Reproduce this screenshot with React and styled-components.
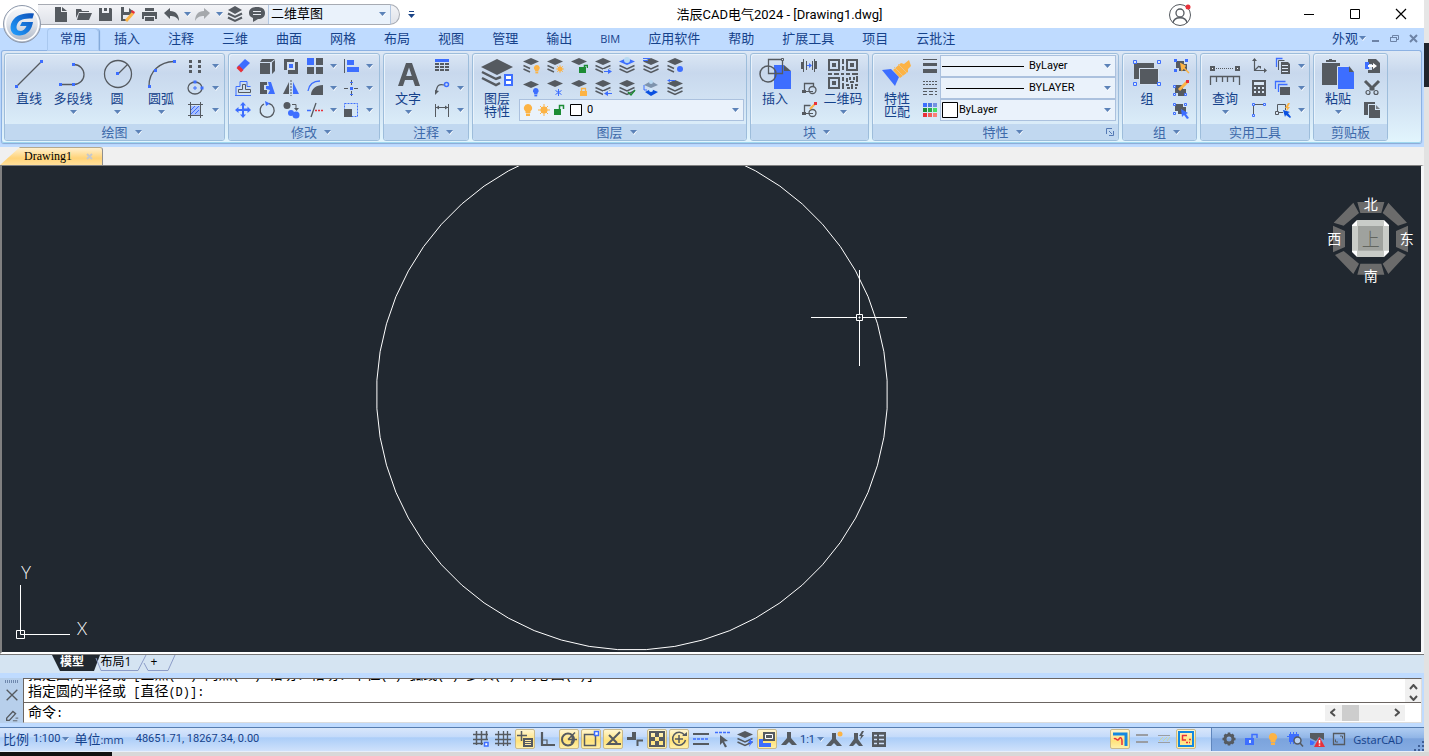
import styled, { createGlobalStyle, css } from 'styled-components';

const G = '#555a60';
const B = '#3d6eff';
const O = '#fcb345';
const R = '#e8303a';
const GR = '#1d8c35';

const StackIcon = ({ top = G, children }) => (
  <>
    <path d="M1 4.500 9 1l8 3.500L9 8z" fill={top} />
    <path d="M1.500 8.500 9 12l7.500-3.500M1.500 12 9 15.500l7.500-3.500" fill="none" stroke={G} strokeWidth="1.500" />
    {children}
  </>
);

const HalfStack = ({ children }) => (
  <>
    <path d="M1 4.500 9 1l8 3.500L9 8z" fill={G} />
    <path d="M1.500 8.500 8 11.500M1.500 12 8 15" fill="none" stroke={G} strokeWidth="1.500" />
    {children}
  </>
);

const Bulb = ({ x = 0, y = 0, s = 1, fill = O }) => (
  <g transform={`translate(${x} ${y}) scale(${s})`} fill={fill}>
    <path d="M4 0a4 4 0 0 0-2.500 7.200V9h5V7.200A4 4 0 0 0 4 0z" />
    <rect x="2" y="9.500" width="4" height="2.500" />
  </g>
);

const ICONS = {
  points: <path fill={G} d="M3 3h3v3H3zM12 3h3v3h-3zM3 8h3v3H3zM12 8h3v3h-3zM3 13h3v3H3zM12 13h3v3h-3z" />,
  ellipse: (
    <>
      <ellipse cx="9" cy="9" rx="7" ry="6" fill="none" stroke={G} strokeWidth="1.300" />
      <path fill={B} d="M7.500 1.500h3v3h-3zM14.500 7.500h3v3h-3zM8.500 7h1v1.500H11v1H9.500V11h-1V9.500H7v-1h1.500z" />
    </>
  ),
  hatch: (
    <>
      <rect x="5" y="5" width="9" height="9" fill="#a9c0fb" />
      <path d="M5 9l4-4M5 13l8-8M9 13l4-4" stroke={B} />
      <path d="M2 3.500h15M2 14.500h15M4.500 1v16M14.500 1v16" stroke={G} />
    </>
  ),
  erase: (
    <>
      <path d="M11 2l5 4-8 8-5-4z" fill={B} />
      <path d="M5 8.500l4.500 4.500L7 15.500 2.500 11z" fill={R} />
    </>
  ),
  box: <path fill={G} d="M2 6h10v11H2zM4 2h13l-4 3H2zM14 5.500l3-2.500v11l-3 3z" />,
  copy: (
    <>
      <path fill={G} d="M2 2h10v3h4v12H6v-4H2z" />
      <path fill="#d5e1f1" d="M5 5h8v8H5z" />
      <path fill={B} d="M7 7h4v4H7z" />
    </>
  ),
  array: (
    <>
      <path fill={B} d="M1 1h7v7H1z" />
      <path fill={G} d="M10 1h7v7h-7zM1 10h7v7H1zM10 10h7v7h-7z" />
    </>
  ),
  align: (
    <>
      <path fill={G} d="M2 2h1v14H2z" />
      <path fill={B} d="M5 3h7v5H5zM5 10h12v5H5z" />
    </>
  ),
  offset: (
    <>
      <path d="M2 16.500v-9h4v-5h7v5h3.500" fill="none" stroke={B} />
      <path d="M16.500 13.500h-12v-3h4v-5h3v5h5z" fill="none" stroke={G} />
      <path d="M1 16.500h16" stroke={B} />
    </>
  ),
  stretch: (
    <>
      <path fill={G} d="M2 3h7v3H6v5h3v4H2z" />
      <path fill={B} d="M10 3h3l4 12h-7l2-4-4-1V7h3z" />
    </>
  ),
  mirror: (
    <>
      <path fill={G} d="M7 3v12H1z" />
      <path d="M9 1v16" stroke={G} strokeDasharray="2 1" />
      <path fill={B} d="M11 3v12h6z" />
    </>
  ),
  fillet: (
    <>
      <path d="M2 12C3 6 7 2 14 2" fill="none" stroke={B} strokeWidth="1.300" />
      <path fill={G} d="M5 16c0-6 5-10 12-10v10z" />
    </>
  ),
  breakAt: (
    <>
      <path d="M2 9.500h4M12 9.500h4M9.500 1v5M9.500 12v5" stroke={G} />
      <path fill={B} d="M8 8h3v3H8zM8 3h3v1H8zM8 15h3v1H8z" />
    </>
  ),
  move: (
    <path
      fill={B}
      d="M9 1l3 3.500h-2v3h3.500v-2L17 9l-3.500 3v-2H10v3.500h2L9 17l-3-3.500h2V10H4.500v2L1 9l3.500-3v2H8V4.500H6z"
    />
  ),
  rotate: (
    <>
      <path d="M6 3a7 7 0 1 0 5-.500" fill="none" stroke={G} strokeWidth="1.300" />
      <path fill={B} d="M7 0l5 2.500L8 5z" />
    </>
  ),
  copyTo: (
    <>
      <circle cx="5" cy="4.500" r="3.500" fill={G} />
      <circle cx="9" cy="12" r="3" fill={B} />
      <circle cx="14" cy="14" r="3.500" fill={B} />
      <path d="M10 3.500h4v4" fill="none" stroke={G} />
      <path fill={G} d="M12 7h5l-2.500 3z" />
    </>
  ),
  trim: (
    <>
      <path d="M10 2L5 16" stroke={G} strokeWidth="1.300" />
      <path d="M1 9.500h4" stroke={B} strokeWidth="1.500" />
      <path d="M9 9.500h9" stroke={R} strokeWidth="1.500" strokeDasharray="2 1" />
    </>
  ),
  scale: (
    <>
      <rect x="2.500" y="2.500" width="13" height="13" fill="none" stroke={B} strokeDasharray="2 1" />
      <path fill={G} d="M2 8h8v8H2z" />
    </>
  ),
  table: (
    <>
      <path fill={B} d="M2 2h14v3H2z" />
      <path fill={G} d="M2 6h4v2H2zM7 6h4v2H7zM12 6h4v2h-4zM2 9h4v2H2zM7 9h4v2H7zM12 9h4v2h-4zM2 12h4v2H2zM7 12h4v2H7zM12 12h4v2h-4z" />
    </>
  ),
  leader: (
    <>
      <path d="M3 13C4 6 6 5 11 6" fill="none" stroke={G} strokeWidth="1.200" />
      <path fill={G} d="M2 11l4 1-4 4z" />
      <circle cx="13.500" cy="5.500" r="2" fill="none" stroke={B} strokeWidth="1.500" />
    </>
  ),
  dimension: (
    <>
      <path d="M2.500 3v13M15.500 3v13M3 6.500h12" fill="none" stroke={G} />
      <path fill={G} d="M3 6.500l3-2v4zM15 6.500l-3-2v4z" />
    </>
  ),
  layOff: (
    <HalfStack>
      <Bulb x={12} y={8} s={0.7} />
    </HalfStack>
  ),
  layFreeze: (
    <HalfStack>
      <circle cx="14" cy="12" r="2.500" fill={O} />
      <path d="M14 8v8M10 12h8M11 9l6 6M17 9l-6 6" stroke={O} strokeWidth=".8" />
    </HalfStack>
  ),
  layUnlock: (
    <>
      <path d="M1 4.500 9 1l8 3.500L9 8z" fill={G} />
      <path fill={GR} d="M9 10h7v6H9z" />
      <path d="M14.500 10V8.500h3V11" fill="none" stroke={GR} strokeWidth="1.500" />
    </>
  ),
  layMatch: (
    <StackIcon>
      <path fill="#c9d9ed" d="M9 12h9v6H9z" />
      <path fill={B} d="M10 14h4v-2l4 2.500-4 2.500v-2h-4z" />
    </StackIcon>
  ),
  layCurrent: (
    <StackIcon top={B}>
      <circle cx="9" cy="3" r="3" fill="#b7d9f2" />
    </StackIcon>
  ),
  layPrev: (
    <StackIcon>
      <path fill={B} d="M1 1h7v1H1zM1 3h5v1H1z" />
    </StackIcon>
  ),
  layWalk: (
    <HalfStack>
      <circle cx="14" cy="12" r="3" fill={B} />
    </HalfStack>
  ),
  layOn: (
    <>
      <path d="M1 5.500 9 2l8 3.500L9 9z" fill={G} />
      <Bulb x={11} y={9} s={0.7} fill={B} />
    </>
  ),
  layThaw: (
    <>
      <path d="M1 4.500 9 1l8 3.500L9 8z" fill={G} />
      <path d="M12.500 10v7M9.500 11.500l6 4M15.500 11.500l-6 4" stroke={B} />
    </>
  ),
  layLock: (
    <>
      <path d="M1 4.500 9 1l8 3.500L9 8z" fill={G} />
      <path fill={O} d="M10 12h7v5h-7z" />
      <path d="M11.500 12v-2.500h4V12" fill="none" stroke={O} strokeWidth="1.300" />
    </>
  ),
  layChange: (
    <StackIcon>
      <path fill="#cfdeef" d="M9 12h9v6H9z" />
      <path fill={B} d="M18 14h-4v-2l-4 2.500 4 2.500v-2h4z" />
    </StackIcon>
  ),
  layCheck: (
    <StackIcon>
      <path d="M10 13l3 3 4-5" fill="none" stroke={GR} strokeWidth="1.500" />
    </StackIcon>
  ),
  layMerge: (
    <>
      <path d="M2 6l7-4 7 4-7 3z" fill="#7d93ad" />
      <path d="M3 13l6-3 7 3-7 4z" fill="#0a50e0" />
      <circle cx="9" cy="3" r="2" fill="#b7d9f2" />
      <circle cx="9" cy="11" r="2" fill="#cfe8fa" />
      <path d="M2 6v5h3" fill="none" stroke={B} />
    </>
  ),
  layIso: (
    <StackIcon>
      <path fill={B} d="M1 1.500L4 0v1h5v1H4v1z" />
    </StackIcon>
  ),
  blockEdit: (
    <>
      <path d="M3.500 2v13M14.500 2v13" stroke={G} />
      <path fill={G} d="M1 5h3v7H1zM14 4h3v8h-3zM6 4h1v9H6zM12 4h1v9h-1z" />
      <path fill={B} d="M7 8h2V6l3 2.500L9 11V9H7z" />
    </>
  ),
  blockBase: (
    <>
      <path d="M4.500 13V4.500h9V7" fill="none" stroke={G} strokeWidth="1.300" />
      <circle cx="12.500" cy="11" r="3.500" fill="none" stroke={G} strokeWidth="1.300" />
      <path fill={G} d="M2 11h4v3H2zM6 12h7v1H6z" />
    </>
  ),
  blockAttr: (
    <>
      <path d="M4.500 13V4.500h6" fill="none" stroke={G} strokeWidth="1.300" />
      <circle cx="12.500" cy="12" r="3.500" fill="none" stroke={G} strokeWidth="1.300" />
      <path fill={G} d="M2 11h4v3H2zM6 12h7v1H6z" />
      <path d="M10 8l5-5" stroke={O} strokeWidth="2" />
      <path fill={R} d="M14 1h3v3h-3z" />
    </>
  ),
  lineWeight: <path fill={G} d="M2 2h14v1H2zM2 6h14v3H2zM2 12h14v4H2z" />,
  lineType: (
    <>
      <path d="M2 2.500h14M2 5.500h14" stroke={G} strokeDasharray="2 1" />
      <path d="M2 9.500h14" stroke={G} />
      <path d="M2 12.500h14M2 15.500h14" stroke={G} strokeDasharray="4 2" />
    </>
  ),
  colors: (
    <>
      <path fill={B} d="M2 2h4v4H2z" />
      <path fill="#4f77df" d="M7 2h4v4H7z" />
      <path fill="#7391e0" d="M12 2h4v4h-4z" />
      <path fill={GR} d="M2 7h4v4H2z" />
      <path fill="#2aa847" d="M7 7h4v4H7z" />
      <path fill="#43df65" d="M12 7h4v4h-4z" />
      <path fill={R} d="M2 12h4v4H2z" />
      <path fill="#f25d57" d="M7 12h4v4H7z" />
      <path fill="#fa7f76" d="M12 12h4v4h-4z" />
    </>
  ),
  groupSearch: (
    <>
      <path fill={G} d="M4 4h8v3h3v7H7v-3H4z" />
      <path fill={B} d="M2 2h3v3H2zM13 2h3v3h-3zM2 12h3v3H2z" />
      <path d="M9 7l4 2-3 4zM12 11l5 5" fill={O} stroke={O} strokeWidth="1.500" />
    </>
  ),
  groupEdit: (
    <>
      <path fill={G} d="M3 6h8v4h3v7H6v-3H3z" />
      <path fill="#dbe7f6" stroke={B} d="M1.500 6.500h2v2h-2zM1.500 14.500h2v2h-2zM12.500 14.500h2v2h-2z" />
      <path d="M7 11l8-8" stroke={O} strokeWidth="3" />
      <path fill={R} d="M14 1h3v3h-3z" />
    </>
  ),
  groupSelect: (
    <>
      <path fill={G} d="M3 3h8v3h3v7H6v-3H3z" />
      <path fill="#dbe7f6" stroke={B} d="M1.500 2.500h2v2h-2zM12.500 2.500h2v2h-2zM1.500 11.500h2v2h-2z" />
      <path fill={B} d="M9 8l7 4-2 1 3 4-2 1-3-4-2 2z" />
    </>
  ),
  ucs: (
    <>
      <path d="M4.500 2v11.500H16M4.500 13.500L9 9" fill="none" stroke={G} strokeWidth="1.200" />
      <path fill={G} d="M2 4l2.500-3L7 4zM14 11l3 2.500-3 2.500zM8 9h3v3z" />
    </>
  ),
  calc: (
    <>
      <path fill={G} d="M2 1h14v16H2z" />
      <path fill="#d9e7f5" d="M4 3h10v3H4zM4 8h2v2H4zM8 8h2v2H8zM12 8h2v2h-2zM4 12h2v2H4zM8 12h2v2H8zM12 12h2v2h-2z" />
    </>
  ),
  corner: (
    <>
      <path d="M3.500 14V3.500H14" fill="none" stroke={G} />
      <path fill="#dbe7f6" stroke={B} d="M2.500 2.500h2v2h-2zM13.500 2.500h2v2h-2zM2.500 13.500h2v2h-2z" />
    </>
  ),
  pages: (
    <>
      <path d="M2.500 10V1.500h6" fill="none" stroke={B} strokeWidth="1.300" />
      <path d="M4.500 13V3.500h6" fill="none" stroke={G} />
      <path fill={G} d="M7 5h7l2 2v10H7z" />
      <path stroke="#dbe7f6" d="M8 8.500h6M8 11.500h6M8 14.500h6" />
    </>
  ),
  windows: (
    <>
      <path d="M1.500 10V2.500h10" fill="none" stroke={B} strokeWidth="1.300" />
      <path d="M4.500 13V5.500h9" fill="none" stroke={B} strokeWidth="1.300" />
      <path fill={G} d="M6 8h10v8H6z" />
    </>
  ),
  quickSelect: (
    <>
      <path d="M3.500 12V3.500h8V9M4 11.500h5" fill="none" stroke={G} />
      <path fill="#dbe7f6" stroke={G} d="M1.500 10.500h3v3h-3z" />
      <path fill={O} d="M14 2l-3 5h2l-1 4 4-5h-2l2-4z" />
      <path fill="#0a50e0" d="M9 9l7 2-2 1 3 4-1 1-4-3-1 2z" />
    </>
  ),
  pasteAs: (
    <>
      <path fill={G} d="M5 2h8l4 4v10H5v-3h4V7H5z" />
      <path fill={B} d="M2 5h4v7H2z" />
      <path fill="#fff" d="M5 8h5V6l4 3-4 3v-2H5z" />
    </>
  ),
  cut: (
    <>
      <path d="M2 2l9 9M16 2l-9 9" stroke={G} strokeWidth="3" />
      <circle cx="5" cy="13.500" r="2" fill="none" stroke={G} strokeWidth="1.200" />
      <circle cx="13" cy="13.500" r="2" fill="none" stroke={G} strokeWidth="1.200" />
    </>
  ),
  copyClip: (
    <>
      <path fill={G} d="M1 1h11v2H5v11H1z" />
      <path fill={G} d="M6 4h6v5h5v8H6z" />
      <path fill="#7b8087" d="M13 4l4 4h-4z" />
    </>
  ),

  newFile: <path fill={G} d="M3 2h6v5h6v10H3zM10 2l5 4h-5z" />,
  open: <path fill={G} d="M2 4h5l1 2h7v1H5l-3 6zM5 8h13l-3 7H3z" />,
  save: <path fill={G} d="M3 3h3v5h7V3h2l1 1v12H3zM8 3h3v3H8z" />,
  saveAs: (
    <>
      <path fill={G} d="M3 2h3v5h5V3l5 4-3 3H5v4h4v2H3z" />
      <path d="M8 16l7-8" stroke={O} strokeWidth="3" />
      <path fill={R} d="M14 5l3 2-1 2-3-2z" />
    </>
  ),
  print: (
    <>
      <path fill={G} d="M5 3h9v3H5zM2 7h15v7h-2v-3H4v3H2z" />
      <path fill={G} d="M5 12h9v4H5z" />
    </>
  ),
  undo: <path fill={G} d="M2 8l6-5v3c6 0 9 4 9 10-2-4-5-5-9-5v3z" />,
  redo: <path fill="#a5a8ac" d="M16 8l-6-5v3C4 6 1 10 1 16c2-4 5-5 9-5v3z" />,
  layers: (
    <>
      <path d="M2 5 9 1l7 4-7 4z" fill={G} />
      <path d="M2 8.500 9 12l7-3.500M2 12.500 9 16l7-3.500" fill="none" stroke={G} strokeWidth="2" />
    </>
  ),
  chat: (
    <>
      <path fill={G} d="M9 2c5 0 8 2 8 6s-3 6-7 6l-5 3v-4c-3-1-4-3-4-5 0-4 3-6 8-6z" />
      <path stroke="#e6e9f0" d="M5 6.500h8M5 9.500h8" />
    </>
  ),

  snap: (
    <>
      <path d="M4.500 1v14M9.500 1v14M14.500 1v9M1 4.500h15M1 9.500h15M1 13.500h10" stroke={G} strokeWidth="1.500" />
      <path fill="#fff" stroke={B} strokeWidth="1.500" d="M12.500 12.500h3.500v3.500h-3.500z" />
    </>
  ),
  grid: <path d="M4.500 1v15M9.500 1v15M13.500 1v15M1 4.500h16M1 9.500h16M1 13.500h16" stroke={G} strokeWidth="1.300" />,
  dynInput: (
    <>
      <path d="M5.500 1v10M1 5.500h10" stroke={G} strokeWidth="1.500" />
      <path fill={G} d="M7 8h10v9H7z" />
      <path stroke="#ffe9a6" d="M9 10.500h6M9 12.500h6M9 14.500h6" />
    </>
  ),
  ortho: (
    <>
      <path d="M4 2v13h13" fill="none" stroke={G} strokeWidth="2.200" />
      <path d="M4 10h5v5" fill="none" stroke={G} strokeWidth="1.200" />
    </>
  ),
  polar: (
    <>
      <circle cx="8" cy="9.500" r="6" fill="none" stroke={G} strokeWidth="2" />
      <path d="M8 9.500h9M8 9.500l7-7M11 5c2 2 2 6 0 8" fill="none" stroke={G} strokeWidth="1.500" />
    </>
  ),
  osnap: (
    <>
      <path d="M2.500 4.500h11v11h-11z" fill="none" stroke={G} strokeWidth="1.500" />
      <path fill="#fff" stroke={B} strokeWidth="1.500" d="M12.500 1.500h4v4h-4z" />
    </>
  ),
  otrack: <path d="M16 2L4 14h13M5 5l8 8" fill="none" stroke={G} strokeWidth="2" />,
  ducs: (
    <>
      <path fill={G} d="M6 2h4v8H1V7h5z" />
      <path d="M11.500 16v-5.500H17" fill="none" stroke={G} strokeWidth="2" />
    </>
  ),
  checker: <path fill={G} fillRule="evenodd" d="M1 1h16v16H1zM3 3v4h4V3zM11 3v4h4V3zM7 7v4h4V7zM3 11v4h4v-4zM11 11v4h4v-4z" />,
  cycle: (
    <>
      <path d="M14.500 5A6.500 6.500 0 1 0 15.500 10" fill="none" stroke={G} strokeWidth="1.500" />
      <path d="M9 5v8M5 9h8" stroke={G} strokeWidth="1.500" />
      <path fill={G} d="M12 6h5V2z" />
    </>
  ),
  lwt: (
    <>
      <path d="M1 4h16M1 14h16" stroke={G} strokeWidth="2" />
      <path d="M1 9h16" stroke={B} strokeWidth="1.500" strokeDasharray="3 1" />
    </>
  ),
  quickProp: (
    <>
      <path d="M1 2.500h16" stroke={B} strokeWidth="1.500" strokeDasharray="3 1" />
      <path fill={G} d="M6 5l8 6-4 .500 3 5-2 1-2.500-5L6 15z" />
    </>
  ),
  stackBolt: (
    <StackIcon>
      <path fill={B} d="M15 8l-3 5h2l-1 4 4-6h-2z" />
    </StackIcon>
  ),
  overlap: (
    <>
      <path fill={B} d="M1 9h4v4h8v4H1z" />
      <path fill={G} d="M5 2h12v9H5z" />
      <path fill="none" stroke="#fff" d="M7.500 4.500h7v4h-7z" />
    </>
  ),
  annot: <path fill={G} d="M7 2h4v6l6 7h-5l-3-3-3 3H1l6-7z" />,
  annotVis: (
    <>
      <path fill={G} d="M6 3h4v6l6 7h-5l-3-3-3 3H0l6-7z" />
      <circle cx="14" cy="4" r="2.500" fill={O} />
    </>
  ),
  annotAuto: <path fill={G} d="M6 3h4v6l5 7h-4l-3-3-3 3H1l5-7zM14 1l-3 5h2l-1 4 4-5h-2l2-4z" />,
  clean: (
    <>
      <path fill={G} d="M2 2h14v15H2z" />
      <path stroke="#cfe0f8" strokeWidth="1.500" d="M4 5.500h3M9 5.500h5M4 9.500h3M9 9.500h5M4 13.500h3M9 13.500h5" />
    </>
  ),
  wallOn: (
    <>
      <path d="M2 4h13v12" fill="none" stroke="#1388e0" strokeWidth="3" />
      <path d="M3 9c2-2 3 3 5 0s3 0 3 2v4" fill="none" stroke={R} strokeWidth="1.500" />
    </>
  ),
  parallel: <path d="M3 5h12M3 12h12" stroke="#9a9da3" strokeWidth="2" />,
  parallel2: (
    <>
      <path d="M3 5.500h12M3 12.500h12" stroke="#9a9da3" />
      <path d="M4 11l4-4M8 11l4-4M12 11l3-4" stroke="#cfd6a0" />
    </>
  ),
  frameOn: (
    <>
      <path d="M2 2h14v14H2z" fill="none" stroke="#1388e0" strokeWidth="2" />
      <path d="M10 5.500H5.500V10H9M9 12.500h2M12 12.500h1M12 9.500h2" fill="none" stroke={R} strokeWidth="1.500" />
    </>
  ),
  gear: (
    <>
      <circle cx="9" cy="9" r="4" fill="none" stroke={G} strokeWidth="3" />
      <path d="M9 2.500v2M9 13.500v2M2.500 9h2M13.500 9h2M4.500 4.500L6 6M12 12l1.500 1.500M13.500 4.500L12 6M6 12l-1.500 1.500" stroke={G} strokeWidth="2.500" />
    </>
  ),
  unlock: (
    <>
      <path fill={B} d="M3 8h9v7H3z" />
      <path d="M10 8V4.500h5V8" fill="none" stroke={B} strokeWidth="1.500" />
      <path fill="#cfe0f8" d="M7 10h2v3H7z" />
    </>
  ),
  tip: <Bulb x={5} y={3} s={1} />,
  inspect: (
    <>
      <path fill={B} d="M3 4h10v8H3z" />
      <path d="M4.500 2v12M7.500 2v12M10.500 2v5M1 6.500h4" stroke={B} />
      <circle cx="11.500" cy="10.500" r="3.500" fill="#b9d0f0" stroke={G} strokeWidth="1.500" />
      <path d="M14 13l3 3.500" stroke={G} strokeWidth="1.500" />
    </>
  ),
  alert: (
    <>
      <path fill={G} d="M2 3h14v7l-5-3-3 4-6-3z" />
      <path fill={B} d="M2 10l5 2-2 3H2z" />
      <path fill={R} d="M11.500 7L17 17H6z" />
      <path stroke="#fff" strokeWidth="1.500" d="M11.500 10v3.500M11.500 14.500v1.200" />
    </>
  ),
  full: (
    <>
      <path d="M3.500 3.500h11v11h-11z" fill="none" stroke={G} strokeWidth="1.300" />
      <path d="M10 6h2.500v2.500M8 12H5.500V9.500" fill="none" stroke={G} />
    </>
  ),
  close: <path d="M3 3l12 12M15 3L3 15" stroke={G} strokeWidth="1.500" />,
  pencil: (
    <>
      <path d="M3 12.500L10 5l3 2.500-7 7.500H3z" fill="none" stroke={G} strokeWidth="1.500" />
      <path d="M10 15.500h5M13 12.500h3" stroke={G} />
    </>
  ),
};

const BIG_ICONS = {
  line: (
    <>
      <path d="M4 28L28 4" stroke={G} strokeWidth="1.300" />
      <path fill={B} d="M2 27h3v3H2zM27 2h3v3h-3z" />
    </>
  ),
  polyline: (
    <>
      <path d="M4 26.500h13a10 10 0 0 0 0-20" fill="none" stroke={G} strokeWidth="1.300" />
      <path fill={B} d="M2 25h3v3H2zM15 25h3v3h-3zM15 5h3v3h-3z" />
    </>
  ),
  circle: (
    <>
      <circle cx="17" cy="16" r="13.500" fill="none" stroke={G} strokeWidth="1.300" />
      <path d="M17 16l10-10" stroke={G} strokeWidth="1.300" />
      <path fill={B} d="M15 14h3v3h-3z" />
    </>
  ),
  arc: (
    <>
      <path d="M4 28C4 13 15 4 29 3.500" fill="none" stroke={G} strokeWidth="1.300" />
      <path fill={B} d="M3 27h3v3H3zM9 11h3v3H9zM28 2h3v3h-3z" />
    </>
  ),
  text: <path fill={G} fillRule="evenodd" d="M14 5h6l8 23h-5l-2-6h-8l-2 6H6zM17 9.500L14.200 18h5.600z" />,
  layerProps: (
    <>
      <path d="M0 9l16-8 16 8-16 8z" fill={G} />
      <path d="M1 14l14 7 5-2M1 20l14 7 4-2" fill="none" stroke={G} strokeWidth="2.500" />
      <path fill={B} d="M23 16h9v12h-9z" />
      <path fill="#fff" d="M25 18h5v3h-5zM25 23h5v3h-5z" />
    </>
  ),
  insert: (
    <>
      <path fill={B} d="M15 7h10v6h7v18H15z" />
      <path fill={G} d="M25 7l7 6h-7z" />
      <circle cx="9" cy="16" r="8" fill="none" stroke={G} strokeWidth="1.500" />
      <path d="M9.500 1.500h14v14h-14z" fill="none" stroke={G} strokeWidth="1.300" />
      <path fill="#d5e1f1" stroke={G} d="M22.500 .500h2v2h-2z" />
    </>
  ),
  qr: (
    <path
      fill={G}
      fillRule="evenodd"
      d="M1 1h12v12H1zM3 3v8h8V3zM5 5h4v4H5zM19 1h12v12H19zM21 3v8h8V3zM23 5h4v4h-4zM1 19h12v12H1zM3 21v8h8v-8zM5 23h4v4H5zM15 1h2v5h-2zM15 8h2v4h-2zM1 15h4v2H1zM7 15h5v2H7zM14 15h3v2h-3zM15 19h2v4h-2zM15 25h2v6h-2zM19 15h4v2h-4zM25 15h6v2h-6zM19 20h2v4h-2zM22 19h2v3h-2zM26 19h2v3h-2zM29 18h2v6h-2zM23 23h4v2h-4zM19 26h3v2h-3zM24 26h2v5h-2zM28 26h3v2h-3zM20 29h3v2h-3zM28 29h2v2h-2z"
    />
  ),
  match: (
    <>
      <path fill={B} d="M1 12l9-1 8 8-4 9z" />
      <path fill={O} d="M12 12l8-7 3 1 5-4 2 6-3 3v3l-8 6z" />
      <path stroke="#e9c48c" d="M13 9l9 9M17 6l9 9" />
    </>
  ),
  group: (
    <>
      <path fill={G} d="M3 5h20v5H8v11H3z" />
      <path fill={G} stroke="#d5e1f1" d="M8.500 10.500h19v16h-19z" />
      <path fill="#dbe7f6" stroke={B} d="M2.500 2.500h3v3h-3zM26.500 2.500h3v3h-3zM2.500 24.500h3v3h-3zM26.500 24.500h3v3h-3z" />
    </>
  ),
  measure: (
    <>
      <path fill={G} d="M1 8h5v5H1zM26 8h5v5h-5z" />
      <path fill="#fff" d="M3 10h1v1H3zM28 10h1v1h-1z" />
      <path d="M7 10.500h18" stroke={G} strokeDasharray="1 1" />
      <path d="M1.500 27v-8.500h29V27M7.500 19v5M13.500 19v5M18.500 19v5M24.500 19v5" fill="none" stroke={G} strokeWidth="1.300" />
    </>
  ),
  paste: (
    <>
      <path fill={G} d="M0 5h18v22H0zM4 2h3V1h3v1h4v2H4z" />
      <path fill={B} stroke="#d5e1f1" d="M15.500 8.500h11l6 6v17h-17z" />
      <path fill={G} d="M27 8l5 6h-5z" />
    </>
  ),
};

const Icon = ({ name, size = 18 }) => (
  <svg width={size} height={size} viewBox="0 0 18 18" aria-hidden="true">
    {ICONS[name]}
  </svg>
);

const BigIcon = ({ name }) => (
  <svg width="32" height="32" viewBox="0 0 32 32" aria-hidden="true">
    {BIG_ICONS[name]}
  </svg>
);

const Arrow = () => (
  <svg width="7" height="5" viewBox="0 0 7 5" aria-hidden="true">
    <path d="M1 1h6L4 5z" fill="#fff" />
    <path d="M0 0h7L3.500 4z" fill="#5b82b8" />
  </svg>
);

const TABS = [
  '常用', '插入', '注释', '三维', '曲面', '网格', '布局', '视图', '管理',
  '输出', 'BIM', '应用软件', '帮助', '扩展工具', '项目', '云批注',
];

const QUICK = ['newFile', 'open', 'save', 'saveAs', 'print', 'undo'];

const MODIFY = [
  ['erase', 'box', 'copy', 'array', null, 'align', null],
  ['offset', 'stretch', 'mirror', 'fillet', null, 'breakAt', null],
  ['move', 'rotate', 'copyTo', 'trim', null, 'scale', null],
];

const LAYER_ROWS = [
  ['layOff', 'layFreeze', 'layUnlock', 'layMatch', 'layCurrent', 'layPrev', 'layWalk'],
  ['layOn', 'layThaw', 'layLock', 'layChange', 'layCheck', 'layMerge', 'layIso'],
];

const STATUS = [
  ['snap'], ['grid'], ['dynInput', true], ['ortho'], ['polar', true],
  ['osnap', true], ['otrack', true], ['ducs'], ['checker', true], ['cycle', true],
  ['lwt'], ['quickProp'], ['stackBolt'], ['overlap', true], ['annot'],
];

// the circle is drawn as 56 chords
const circlePoints = Array.from({ length: 56 }, (_, i) => {
  const a = ((i + 0.5) * Math.PI) / 28;
  return `${(630 + 255.5 * Math.cos(a)).toFixed(1)},${(228.5 + 255.5 * Math.sin(a)).toFixed(1)}`;
}).join(' ');

function Tool({ icon, label, lines, menu }) {
  return (
    <StBigTool type="button">
      <BigIcon name={icon} />
      <StBigLabel>
        {label}
        {lines && <br />}
        {lines}
      </StBigLabel>
      {menu && <Arrow />}
    </StBigTool>
  );
}

function ToolRows({ rows, gap, narrow }) {
  return (
    <StRows>
      {rows.map((row, i) => (
        <StRow key={i} gap={gap}>
          {row.map((name, j) =>
            name ? (
              <StSmallTool type="button" key={j} aria-label={name} narrow={narrow ? 1 : 0}>
                <Icon name={name} />
              </StSmallTool>
            ) : (
              <StArrowTool type="button" key={j} aria-label="更多">
                <Arrow />
              </StArrowTool>
            )
          )}
        </StRow>
      ))}
    </StRows>
  );
}

function Panel({ title, w, menu, launcher, children }) {
  return (
    <StPanel w={w}>
      <StPanelBody>{children}</StPanelBody>
      <StPanelTitle>
        <span />
        <span>{title}</span>
        <StTitleEnd>
          {menu && <Arrow />}
          {launcher && (
            <StLauncher type="button" aria-label="特性对话框">
              <svg width="8" height="8" viewBox="0 0 8 8">
                <path d="M.500 6V.500H6" fill="none" stroke="#5479b4" />
                <path d="M3 3l3 3M7.500 3v4.500H3" fill="none" stroke="#5479b4" />
              </svg>
            </StLauncher>
          )}
        </StTitleEnd>
      </StPanelTitle>
    </StPanel>
  );
}

function Header() {
  return (
    <StHeader>
      <StTitleBar>
        <StQuick>
          {QUICK.map((name) => (
            <StQuickButton type="button" key={name} aria-label={name}>
              <Icon name={name} />
            </StQuickButton>
          ))}
          <StQuickMenu type="button" aria-label="放弃列表"><Arrow /></StQuickMenu>
          <StQuickButton type="button" aria-label="redo"><Icon name="redo" /></StQuickButton>
          <StQuickMenu type="button" aria-label="重做列表"><Arrow /></StQuickMenu>
          <StQuickButton type="button" aria-label="layers"><Icon name="layers" /></StQuickButton>
          <StQuickButton type="button" aria-label="chat"><Icon name="chat" /></StQuickButton>
          <StWorkspace>
            <StSelect aria-label="工作空间" large={1}>
              <option>二维草图</option>
            </StSelect>
            <Arrow />
          </StWorkspace>
        </StQuick>
        <StCustomize type="button" aria-label="自定义快速访问工具栏">
          <svg width="7" height="7" viewBox="0 0 7 7">
            <path d="M1 0h5v1H1zM0 3h7L3.500 7z" fill="#1c4587" />
          </svg>
        </StCustomize>
        <StTitle>浩辰CAD电气2024 - [Drawing1.dwg]</StTitle>
        <StUser type="button" aria-label="用户">
          <svg width="24" height="24" viewBox="0 0 24 24">
            <circle cx="12" cy="12" r="10.500" fill="none" stroke={G} />
            <circle cx="12" cy="10" r="4" fill="none" stroke={G} strokeWidth="1.300" />
            <path d="M5 20c1-7 13-7 14 0" fill="none" stroke={G} strokeWidth="1.300" />
            <circle cx="20" cy="4" r="2.500" fill={R} />
          </svg>
        </StUser>
        <StWindowButton type="button" aria-label="最小化">
          <svg width="12" height="12"><path d="M1 6.500h10" stroke="#000" /></svg>
        </StWindowButton>
        <StWindowButton type="button" aria-label="最大化">
          <svg width="12" height="12"><path d="M1.500 1.500h9v9h-9z" fill="none" stroke="#000" /></svg>
        </StWindowButton>
        <StWindowButton type="button" aria-label="关闭">
          <svg width="12" height="12"><path d="M1 1l10 10M11 1L1 11" stroke="#000" strokeWidth="1.200" /></svg>
        </StWindowButton>
      </StTitleBar>
      <StTabBar>
        {TABS.map((tab, i) => (
          <StTab type="button" key={tab} active={i === 0 ? 1 : 0} latin={tab === 'BIM' ? 1 : 0}>
            {tab}
          </StTab>
        ))}
        <StLook>
          <StLookButton type="button">外观<Arrow /></StLookButton>
          <StMdiButton type="button" aria-label="最小化图形">
            <svg width="9" height="9"><path d="M1 7h7" stroke="#6d83a6" strokeWidth="2" /></svg>
          </StMdiButton>
          <StMdiButton type="button" aria-label="还原图形">
            <svg width="9" height="9">
              <path d="M2.500 3V1.500h6v4H7M.500 3.500h6v4h-6z" fill="none" stroke="#6d83a6" />
              <path d="M0 3h7v1H0z" fill="#6d83a6" />
            </svg>
          </StMdiButton>
          <StMdiButton type="button" aria-label="关闭图形">
            <svg width="9" height="9"><path d="M1 1l7 7M8 1L1 8" stroke="#6d83a6" strokeWidth="2" /></svg>
          </StMdiButton>
        </StLook>
      </StTabBar>
      <StLogo type="button" aria-label="应用程序菜单">
        <svg width="40" height="40" viewBox="0 0 40 40">
          <defs>
            <linearGradient id="ring" x1="0" y1="0" x2="0" y2="1">
              <stop offset="0" stopColor="#fafbfd" />
              <stop offset=".5" stopColor="#dfe3ea" />
              <stop offset="1" stopColor="#aab4c4" />
            </linearGradient>
            <linearGradient id="mark" x1="1" y1="0" x2="0" y2="1">
              <stop offset="0" stopColor="#0b4fb8" />
              <stop offset="1" stopColor="#22a0ff" />
            </linearGradient>
          </defs>
          <circle cx="20" cy="20" r="18.500" fill="url(#ring)" stroke="#8e99ab" />
          <circle cx="20" cy="20" r="16.500" fill="none" stroke="#fff" strokeWidth="1.500" />
          <path
            fill="url(#mark)"
            d="M32 9.500C22 8 12 11 9 20c-2 8 3 12 9 11.500 8-.500 12-6.500 13-13.500H20l-2 4h6.500c-1 3-4 5-6 5-4 0-5-3.500-3-7.500 2-4 6-5 15-5z"
          />
        </svg>
      </StLogo>
    </StHeader>
  );
}

function Ribbon() {
  return (
    <StRibbon>
      <Panel title="绘图" w={221} menu>
        <Tool icon="line" label="直线" />
        <Tool icon="polyline" label="多段线" menu />
        <Tool icon="circle" label="圆" menu />
        <Tool icon="arc" label="圆弧" menu />
        <ToolRows gap={2} rows={[['points', null], ['ellipse', null], ['hatch', null]]} />
      </Panel>
      <Panel title="修改" w={152} menu>
        <ToolRows rows={MODIFY} />
      </Panel>
      <Panel title="注释" w={86} menu>
        <Tool icon="text" label="文字" menu />
        <ToolRows rows={[['table'], ['leader', null], ['dimension', null]]} />
      </Panel>
      <Panel title="图层" w={275} menu>
        <Tool icon="layerProps" label="图层" lines="特性" />
        <StStack>
          <ToolRows rows={LAYER_ROWS} />
          <StCombo>
            <svg width="66" height="16" viewBox="0 0 66 16" aria-hidden="true">
              <Bulb x={3} y={2} />
              <circle cx="23" cy="8" r="3.500" fill={O} />
              <path d="M23 2v12M17 8h12M19 4l8 8M27 4l-8 8" stroke={O} />
              <path fill={GR} d="M33 7h7v6h-7z" />
              <path d="M38.500 7V3.500h4V7" fill="none" stroke={GR} strokeWidth="1.500" />
              <path fill="#fff" stroke="#000" d="M49.500 2.500h11v11h-11z" />
            </svg>
            <StSelect aria-label="当前图层"><option>0</option></StSelect>
            <Arrow />
          </StCombo>
        </StStack>
      </Panel>
      <Panel title="块" w={119} menu>
        <Tool icon="insert" label="插入" />
        <ToolRows rows={[['blockEdit'], ['blockBase'], ['blockAttr']]} />
        <Tool icon="qr" label="二维码" menu />
      </Panel>
      <Panel title="特性" w={247} menu launcher>
        <Tool icon="match" label="特性" lines="匹配" />
        <ToolRows narrow rows={[['lineWeight'], ['lineType'], ['colors']]} />
        <StStack>
          <StCombo>
            <svg width="87" height="16" aria-hidden="true"><path d="M0 8.500h82" stroke="#000" /></svg>
            <StSelect aria-label="线宽"><option>ByLayer</option></StSelect>
            <Arrow />
          </StCombo>
          <StCombo>
            <svg width="87" height="16" aria-hidden="true"><path d="M4 8.500h78" stroke="#000" /></svg>
            <StSelect aria-label="线型"><option>BYLAYER</option></StSelect>
            <Arrow />
          </StCombo>
          <StCombo>
            <svg width="17" height="16" aria-hidden="true"><path d="M.500 .500h15v15H.500z" fill="#fff" stroke="#000" /></svg>
            <StSelect aria-label="颜色"><option>ByLayer</option></StSelect>
            <Arrow />
          </StCombo>
        </StStack>
      </Panel>
      <Panel title="组" w={75} menu>
        <Tool icon="group" label="组" />
        <ToolRows rows={[['groupSearch'], ['groupEdit'], ['groupSelect']]} />
      </Panel>
      <Panel title="实用工具" w={110}>
        <Tool icon="measure" label="查询" menu />
        <ToolRows rows={[['ucs', 'pages', null], ['calc', 'windows', null], ['corner', 'quickSelect', null]]} />
      </Panel>
      <Panel title="剪贴板" w={75}>
        <Tool icon="paste" label="粘贴" menu />
        <ToolRows rows={[['pasteAs'], ['cut'], ['copyClip']]} />
      </Panel>
    </StRibbon>
  );
}

function Drawing() {
  return (
    <StCanvas>
      <StScene aria-label="图形">
        <polygon points={circlePoints} fill="none" stroke="#fff" />
        <path d="M809 151.500h96M857.500 104v96" stroke="#fff" />
        <path d="M854.500 148.500h6v6h-6zM857 151h1v1h-1z" fill="#212830" stroke="#fff" />
      </StScene>
      <StCompass width="90" height="92" viewBox="45 39 270 276">
        <g fill="#6b6b6b">
          <path d="M142 66h81l-9 33h-63zM142 284h81l-9-33h-63zM69 137v80l36-16v-48zM294 137v80l-36-16v-48z" />
          <path d="M130 68l17 31-46 38-30-9zM235 68l-17 31 46 38 27-9zM130 282l17-31-46-38-26 12zM235 282l-17-31 46-38 24 12z" />
        </g>
        <path d="M141 120h81l15 15v81l-15 15h-81l-15-15v-81z" fill="#fff" />
        <path d="M141 120h81v111h-81zM126 138h111v74H126z" fill="#c9ccc8" />
        <path d="M144 138h75v74h-75z" fill="#9fa29e" />
        <text x="182" y="199" fontSize="54" textAnchor="middle" fill="#62655f">上</text>
        <g fontSize="42" textAnchor="middle" fill="#fff" fontWeight="400">
          <text x="182" y="87">北</text>
          <text x="182" y="303">南</text>
          <text x="73" y="193">西</text>
          <text x="290" y="193">东</text>
        </g>
      </StCompass>
      <StUcs width="84" height="84" viewBox="0 0 84 84">
        <path d="M6.500 25v49.500H56M2.500 70.500h8v8h-8z" fill="none" stroke="#fff" />
        <g fill="#fff" fontSize="17" textAnchor="middle">
          <text x="12" y="19">Y</text>
          <text x="68" y="75">X</text>
        </g>
      </StUcs>
    </StCanvas>
  );
}

function CommandLine() {
  return (
    <StCommand>
      <StCommandSide>
        <StGrip />
        <StSideButton type="button" aria-label="关闭命令行"><Icon name="close" size={16} /></StSideButton>
        <StSideButton type="button" aria-label="编辑"><Icon name="pencil" size={16} /></StSideButton>
      </StCommandSide>
      <StCommandBox>
        <StHistory>
          <StHistoryText>
            <StPastLine>
              指定圆的圆心或<i> [</i>三点<i>(3P)/</i>两点<i>(2P)/</i>相切、相切、半径<i>(T)/</i>弧线<i>(A)/</i>多次<i>(M)/</i>同心圆<i>(C)]:</i>
            </StPastLine>
            <p>
              指定圆的半径或<i> [</i>直径<i>(D)]:</i>
            </p>
          </StHistoryText>
          <StScrollY>
            <svg width="9" height="6"><path d="M1 5l3.500-4L8 5" fill="none" stroke="#505050" strokeWidth="2" /></svg>
            <svg width="9" height="6"><path d="M1 1l3.500 4L8 1" fill="none" stroke="#505050" strokeWidth="2" /></svg>
          </StScrollY>
        </StHistory>
        <StPrompt>
          <label htmlFor="cmd">命令<i>:</i></label>
          <StPromptInput id="cmd" type="text" />
          <StScrollX>
            <svg width="6" height="9"><path d="M5 1L1 4.500 5 8" fill="none" stroke="#505050" strokeWidth="2" /></svg>
            <StThumb />
            <svg width="6" height="9"><path d="M1 1l4 3.500L1 8" fill="none" stroke="#505050" strokeWidth="2" /></svg>
          </StScrollX>
        </StPrompt>
      </StCommandBox>
    </StCommand>
  );
}

function StatusBar() {
  return (
    <StStatus>
      <StInfo>
        <StInfoText>比例</StInfoText>
        <StScale type="button">1:100<Arrow /></StScale>
        <StInfoText>单位<small>:mm</small></StInfoText>
        <StCoords>48651.71, 18267.34, 0.00</StCoords>
      </StInfo>
      {STATUS.map(([name, on]) => (
        <StToggle type="button" key={name} aria-label={name} on={on ? 1 : 0}>
          <Icon name={name} />
        </StToggle>
      ))}
      <StRatio type="button">1:1<Arrow /></StRatio>
      {['annotVis', 'annotAuto', 'clean'].map((name) => (
        <StToggle type="button" key={name} aria-label={name}>
          <Icon name={name} />
        </StToggle>
      ))}
      <StSpacer />
      <StToggle type="button" aria-label="墙体" on={1}><Icon name="wallOn" /></StToggle>
      <StToggle type="button" aria-label="双线"><Icon name="parallel" /></StToggle>
      <StToggle type="button" aria-label="填充"><Icon name="parallel2" /></StToggle>
      <StToggle type="button" aria-label="边框" on={1}><Icon name="frameOn" /></StToggle>
      <StTray>
        {['gear', 'unlock', 'tip', 'inspect', 'alert', 'full'].map((name) => (
          <StToggle type="button" key={name} aria-label={name}>
            <Icon name={name} />
          </StToggle>
        ))}
        <StBrand>GstarCAD</StBrand>
        <StSizeGrip width="10" height="10" viewBox="0 0 10 10">
          <path fill="#3f5f96" d="M8 0h2v2H8zM4 4h2v2H4zM8 4h2v2H8zM0 8h2v2H0zM4 8h2v2H4zM8 8h2v2H8z" />
        </StSizeGrip>
      </StTray>
    </StStatus>
  );
}

function App() {
  return (
    <>
      <GlobalStyle />
      <StDesktop>
        <StWindow>
          <Header />
          <Ribbon />
          <StDocTabs>
            <StDocTab type="button">
              Drawing1
              <svg width="7" height="7"><path d="M1 1l5 5M6 1L1 6" stroke="#c5c8cc" strokeWidth="2" /></svg>
            </StDocTab>
          </StDocTabs>
          <Drawing />
          <StLayouts>
            <StModelTab type="button">模型</StModelTab>
            <StLayoutTab type="button" w={46}>
              布局1
              <svg width="50" height="16"><path d="M-4 3l5 12.500h37L46 0" fill="none" stroke="#8c9cc8" /></svg>
            </StLayoutTab>
            <StLayoutTab type="button" w={30}>
              +
              <svg width="34" height="16"><path d="M-2 8l4 7.500h20L29 0" fill="none" stroke="#8c9cc8" /></svg>
            </StLayoutTab>
          </StLayouts>
          <CommandLine />
          <StatusBar />
        </StWindow>
      </StDesktop>
    </>
  );
}

export default App;

const GlobalStyle = createGlobalStyle`
  * {
    box-sizing: border-box;
  }
  body {
    margin: 0;
    font-family: "Open Sans", "Noto Sans CJK SC", sans-serif;
    font-size: 13px;
    color: #15428b;
  }
  button, select, input {
    font: inherit;
    color: inherit;
    border: 0;
    padding: 0;
    background: none;
  }
  svg {
    display: block;
    flex: none;
  }
  p {
    margin: 0;
  }
`;

const center = css`
  display: flex;
  align-items: center;
  justify-content: center;
`;

const smallLatin = css`
  font-family: Roboto, "Noto Sans CJK SC", sans-serif;
  font-size: 11px;
`;

const StDesktop = styled.div`
  min-height: 100vh;
  display: flex;
  padding: 0 5px 4px 0;
  background:
    linear-gradient(90deg, #111 112px, #d8d8d8 112px) bottom / 100% 4px no-repeat,
    linear-gradient(#e6e6e6 43px, #20252d 43px, #20252d 87px, #e2e2e2 87px);
`;

const StWindow = styled.div`
  flex: 1;
  min-width: 0;
  display: flex;
  flex-direction: column;
  background: #bfdbff;
`;

const StHeader = styled.header`
  position: relative;
`;

const StTitleBar = styled.div`
  height: 28px;
  display: flex;
  align-items: center;
  background: #fff;
`;

const StLogo = styled.button`
  position: absolute;
  left: 2px;
  top: 4px;
`;

const StQuick = styled.div`
  height: 21px;
  margin-left: 38px;
  padding: 0 8px 0 12px;
  display: flex;
  align-items: center;
  background: linear-gradient(#f3f4f7, #dfe2e9);
  border: 1px solid #a7abb3;
  border-left: 0;
  border-radius: 0 11px 11px 0;
`;

const StQuickButton = styled.button`
  ${center}
  width: 22px;
  height: 19px;
`;

const StQuickMenu = styled.button`
  ${center}
  width: 10px;
  height: 19px;
`;

const StWorkspace = styled.div`
  width: 123px;
  height: 19px;
  padding: 0 4px 0 2px;
  display: flex;
  align-items: center;
  color: #000;
  background: #eaf2fb;
  border: solid #b3c7e1;
  border-width: 0 1px;
`;

const StSelect = styled.select`
  flex: 1;
  min-width: 0;
  height: 16px;
  line-height: 16px;
  appearance: none;
  outline: 0;
  color: #000;
  ${smallLatin}
  ${(props) =>
    props.large &&
    css`
      font-size: 13px;
    `}
`;

const StCustomize = styled.button`
  ${center}
  width: 23px;
  height: 20px;
`;

const StTitle = styled.div`
  flex: 1;
  padding-right: 32px;
  text-align: center;
  color: #000;
  font-family: Roboto, "Noto Sans CJK SC", sans-serif;
  font-size: 13px;
  line-height: 29px;
`;

const StUser = styled.button`
  ${center}
  width: 24px;
  height: 28px;
  padding-top: 2px;
  margin-right: 94px;
`;

const StWindowButton = styled.button`
  ${center}
  width: 46px;
  height: 28px;
`;

const StTabBar = styled.nav`
  height: 22px;
  padding: 1px 1px 0 46px;
  display: flex;
`;

const StTab = styled.button`
  height: 21px;
  margin: 0 2px;
  padding: 0 12px 2px;
  line-height: 19px;
  white-space: nowrap;
  ${(props) =>
    props.latin &&
    css`
      font-size: 11px;
    `}
  ${(props) =>
    props.active &&
    css`
      background: linear-gradient(#f8fbff, #dfe9f6);
      border-radius: 3px 3px 0 0;
      box-shadow: 0 0 0 1px #a9c8ef, 2px 0 1px #7fa6d8;
    `}
`;

const StLook = styled.div`
  margin-left: auto;
  height: 18px;
  display: flex;
  align-items: center;
`;

const StLookButton = styled.button`
  display: flex;
  align-items: center;
  gap: 1px;
  line-height: 18px;
`;

const StMdiButton = styled.button`
  ${center}
  width: 19px;
  height: 18px;
`;

const StRibbon = styled.section`
  height: 93px;
  margin: 0 2px 4px 1px;
  padding: 2px;
  display: flex;
  gap: 3px;
  border: 1px solid #8db2e3;
  border-bottom-color: #9fd8f0;
  border-radius: 3px;
  background: linear-gradient(#dde8f5, #c8d8ed 24%, #d3e4f4 60%, #e2f5fd);
  box-shadow: 0 1px 1px #8aa8d4;
`;

const StPanel = styled.div`
  flex: none;
  width: ${(props) => props.w}px;
  height: 88px;
  display: flex;
  flex-direction: column;
  border: 1px solid #9dbddb;
  border-radius: 3px;
  box-shadow: inset 1px 1px 0 #e9f2fb;
  overflow: hidden;
`;

const StPanelBody = styled.div`
  flex: 1;
  padding: 1px 2px 0;
  display: flex;
`;

const StPanelTitle = styled.div`
  height: 16px;
  display: grid;
  grid-template-columns: 1fr auto 1fr;
  align-items: center;
  background: #c1d8f0;
  color: #3e6aaa;
  line-height: 16px;
`;

const StTitleEnd = styled.span`
  padding: 0 4px 0 7px;
  display: flex;
  align-items: center;
`;

const StLauncher = styled.button`
  margin-left: auto;
`;

const StBigTool = styled.button`
  flex: none;
  width: 44px;
  padding-top: 3px;
  display: flex;
  flex-direction: column;
  align-items: center;
  justify-content: flex-start;
`;

const StBigLabel = styled.span`
  margin: 2px 0 5px;
  line-height: 13px;
  white-space: nowrap;
`;

const StRows = styled.div`
  flex: none;
`;

const StRow = styled.div`
  display: flex;
  gap: ${(props) => props.gap || 0}px;
`;

const StSmallTool = styled.button`
  ${center}
  width: ${(props) => (props.narrow ? 21 : 24)}px;
  height: 22px;
`;

const StArrowTool = styled.button`
  ${center}
  width: 12px;
  height: 22px;
`;

const StStack = styled.div`
  flex: 1;
  min-width: 0;
  display: flex;
  flex-direction: column;
`;

const StCombo = styled.div`
  height: 22px;
  padding: 0 4px 0 1px;
  display: flex;
  align-items: center;
  background: #eaf2fb;
  border: 1px solid #abc1de;
`;

const StDocTabs = styled.div`
  height: 18px;
  display: flex;
  background: #f0f0f0;
`;

const StDocTab = styled.button`
  width: 103px;
  padding: 0 9px 1px 24px;
  display: flex;
  align-items: center;
  justify-content: space-between;
  color: #000;
  font-family: "Liberation Serif", serif;
  font-size: 12px;
  background: linear-gradient(#fff0cf, #ffd378 60%, #ffdf9a);
  border-right: 1px solid #8f8f8f;
  border-top: 1px solid #b5a98d;
  border-radius: 0 3px 0 0;
  clip-path: polygon(20px 0, 100% 0, 100% 100%, 0 100%);
`;

const StCanvas = styled.main`
  position: relative;
  flex: 1;
  min-height: 300px;
  overflow: hidden;
  background: #212830;
  border: solid #808080;
  border-width: 1px 0 0 2px;
  border-right: 3px solid #f4f6f8;
  border-bottom: 2px solid #fff;
`;

const StScene = styled.svg`
  position: absolute;
  width: 100%;
  height: 100%;
`;

const StCompass = styled.svg`
  position: absolute;
  top: 27px;
  right: 6px;
  font-family: "Noto Sans CJK SC", sans-serif;
  font-weight: 300;
`;

const StUcs = styled.svg`
  position: absolute;
  left: 12px;
  bottom: 8px;
  font-family: Lato, sans-serif;
  font-weight: 300;
`;

const StLayouts = styled.div`
  height: 19px;
  padding-left: 52px;
  display: flex;
  background: #d5e4f2;
  border-top: 1px solid #777;
`;

const StModelTab = styled.button`
  width: 48px;
  height: 16px;
  padding: 0 8px 3px 0;
  color: #fff;
  font-size: 12px;
  font-weight: 700;
  line-height: 13px;
  background: #212830;
  clip-path: polygon(0 0, 100% 0, 42px 100%, 8px 100%);
`;

const StLayoutTab = styled.button`
  position: relative;
  width: ${(props) => props.w}px;
  height: 16px;
  padding: 0 14px 3px 0;
  color: #000;
  font-size: 12px;
  line-height: 13px;
  white-space: nowrap;

  svg {
    position: absolute;
    left: 0;
    top: 0;
    overflow: visible;
  }
`;

const StCommand = styled.section`
  height: 45px;
  margin: 5px 2px 4px 0;
  display: flex;
  color: #000;
  font-size: 14px;

  i {
    font-family: "Liberation Mono", monospace;
    font-size: 12px;
    font-style: normal;
    white-space: pre;
  }
`;

const StCommandSide = styled.div`
  width: 23px;
  padding-top: 2px;
  display: flex;
  flex-direction: column;
  align-items: center;
  gap: 4px;
  background: #b7cfeb;
`;

const StGrip = styled.div`
  width: 13px;
  height: 4px;
  background: repeating-linear-gradient(90deg, #6f88ad 0 1px, transparent 1px 2px);
`;

const StSideButton = styled.button`
  ${center}
  width: 16px;
  height: 16px;
`;

const StCommandBox = styled.div`
  flex: 1;
  min-width: 0;
  background: #fff;
  border: 1px solid #6b6562;
  border-right-color: #dcdcdc;
  border-bottom-color: #dcdcdc;
`;

const StHistory = styled.div`
  height: 24px;
  display: flex;
  border-bottom: 1px solid #6b6562;
`;

const StHistoryText = styled.div`
  flex: 1;
  padding-left: 4px;
  display: flex;
  flex-direction: column;
  justify-content: flex-end;
  line-height: 18px;
  overflow: hidden;
  white-space: nowrap;

  p {
    flex: none;
  }
`;

const StPastLine = styled.p`
  line-height: 12px;
`;

const StScrollY = styled.div`
  width: 16px;
  padding: 5px 0 1px;
  display: flex;
  flex-direction: column;
  align-items: center;
  justify-content: space-between;
  background: #f0f0f0;
`;

const StPrompt = styled.div`
  height: 19px;
  padding-left: 4px;
  display: flex;
  align-items: center;
  line-height: 18px;
`;

const StPromptInput = styled.input`
  flex: 1;
  min-width: 0;
  height: 18px;
  outline: 0;
`;

const StScrollX = styled.div`
  width: 80px;
  height: 16px;
  margin-right: 16px;
  padding: 0 5px;
  display: flex;
  align-items: center;
  background: #f0f0f0;
`;

const StThumb = styled.span`
  width: 17px;
  height: 16px;
  margin: 0 auto 0 6px;
  background: #cdcdcd;
`;

const StStatus = styled.footer`
  height: 25px;
  padding-bottom: 1px;
  display: flex;
  align-items: center;
  border-top: 1px solid #567db0;
  border-bottom: 1px solid #e8effa;
  background: linear-gradient(#d9e7fb, #c3dafa 40%, #abcdf8 42%, #cfe1fb);
`;

const StInfo = styled.div`
  flex: none;
  width: 470px;
  padding-left: 3px;
  display: flex;
  align-items: center;
  line-height: 20px;
`;

const StInfoText = styled.span`
  white-space: nowrap;

  small {
    font-size: 11px;
  }
`;

const StScale = styled.button`
  margin: 0 5px 0 4px;
  display: flex;
  align-items: center;
  gap: 2px;
  ${smallLatin}
`;

const StCoords = styled.span`
  margin-left: 12px;
  ${smallLatin}
`;

const StToggle = styled.button`
  ${center}
  flex: none;
  width: 20px;
  height: 20px;
  margin: 0 1px;
  ${(props) =>
    props.on &&
    css`
      background: linear-gradient(#fff6d0, #ffe27a 60%, #fff0a8);
      border: 1px solid #c9b98a;
      border-radius: 2px;
    `}
`;

const StRatio = styled.button`
  ${center}
  width: 24px;
  gap: 2px;
  ${smallLatin}
`;

const StSpacer = styled.div`
  flex: 1;
`;

const StTray = styled.div`
  height: 23px;
  margin-left: 14px;
  padding-left: 6px;
  display: flex;
  align-items: center;
  border-left: 1px solid #5f86bd;
  background: linear-gradient(#b0cdf2, #8fb4e6 45%, #7ba3dc 46%, #84abe2);
`;

const StBrand = styled.span`
  margin: 0 11px 0 3px;
  font-size: 11px;
`;

const StSizeGrip = styled.svg`
  align-self: flex-end;
`;
